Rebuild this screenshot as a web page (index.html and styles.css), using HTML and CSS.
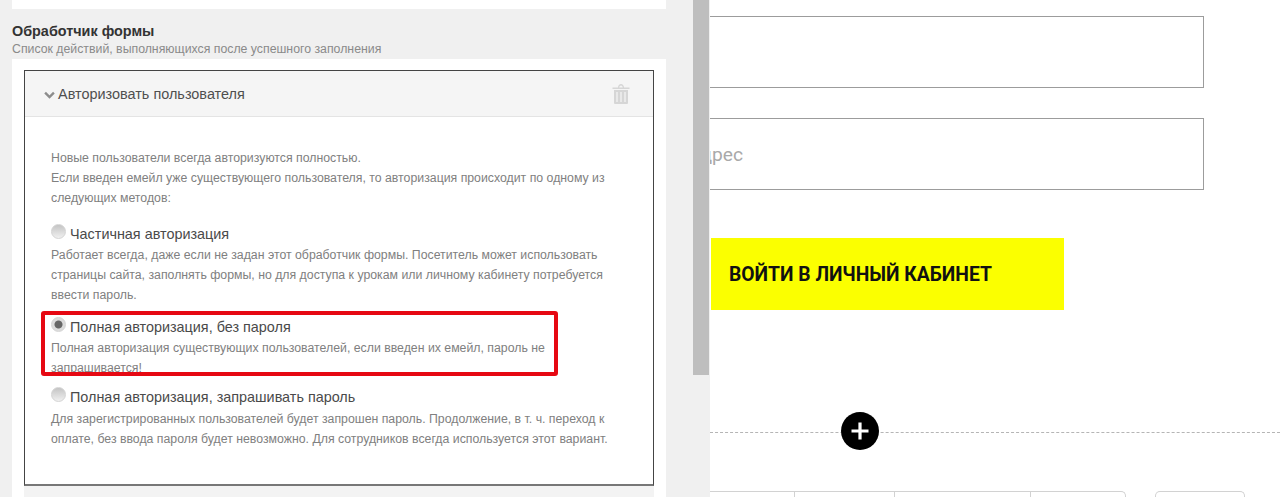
FILE: index.html
```html
<!DOCTYPE html>
<html lang="ru">
<head>
    <meta charset="UTF-8">
    <title>Обработчик формы</title>
    <link rel="stylesheet" href="styles.css">
</head>
<body>
    <div class="sidebar">
        <div class="sidebar-content">
            <div class="top-box"></div>
            <div class="section-head">
                <div class="section-title">Обработчик формы</div>
                <div class="section-sub">Список действий, выполняющихся после успешного заполнения</div>
            </div>
            <div class="section-box">
                <div class="card">
                    <div class="card-head">
                        <svg class="chevron" viewBox="0 0 12 8"><path d="M1.2 1.5 6 6.2l4.800-4.700" fill="none" stroke="#8c8c8c" stroke-width="2.600"/></svg>
                        <span class="card-title">Авторизовать пользователя</span>
                        <svg class="trash" viewBox="0 0 18 21">
                            <path d="M0.500 4.500h17v1.500h-17zM6 4.500c0-4.700 6-4.700 6 0h-1.300c0-2.800-3.400-2.800-3.400 0z" fill="#d6d6d6"/>
                            <path d="M2 7h14v13a1 1 0 0 1-1 1H3a1 1 0 0 1-1-1z" fill="#d6d6d6"/>
                            <path d="M5 9v10M9 9v10M13 9v10" stroke="#f5f5f5" stroke-width="1.200"/>
                        </svg>
                    </div>
                    <div class="card-body">
                        <p class="intro">Новые пользователи всегда авторизуются полностью.<br>Если введен емейл уже существующего пользователя, то авторизация происходит по одному из следующих методов:</p>
                        <div class="option option-first">
                            <label class="option-label"><input type="radio" name="auth">Частичная авторизация</label>
                            <p class="option-text">Работает всегда, даже если не задан этот обработчик формы. Посетитель может использовать страницы сайта, заполнять формы, но для доступа к урокам или личному кабинету потребуется ввести пароль.</p>
                        </div>
                        <div class="option option-second">
                            <div class="highlight"></div>
                            <label class="option-label"><input type="radio" name="auth" checked>Полная авторизация, без пароля</label>
                            <p class="option-text">Полная авторизация существующих пользователей, если введен их емейл, пароль не запрашивается!</p>
                        </div>
                        <div class="option option-third">
                            <label class="option-label"><input type="radio" name="auth">Полная авторизация, запрашивать пароль</label>
                            <p class="option-text">Для зарегистрированных пользователей будет запрошен пароль. Продолжение, в т. ч. переход к оплате, без ввода пароля будет невозможно. Для сотрудников всегда используется этот вариант.</p>
                        </div>
                    </div>
                </div>
                <div class="card-after"></div>
            </div>
        </div>
        <div class="scrollbar"><div class="scroll-thumb"></div></div>
    </div>

    <div class="preview">
        <div class="form">
            <div class="field"></div>
            <div class="field"><span class="placeholder">Адрес</span></div>
            <div class="submit">ВОЙТИ В ЛИЧНЫЙ КАБИНЕТ</div>
        </div>
        <div class="divider">
            <div class="add-btn">
                <svg viewBox="0 0 20 20"><path d="M10 1.500v17M1.500 10h17" stroke="#fff" stroke-width="3.200"/></svg>
            </div>
        </div>
        <div class="tabs-row">
            <div class="tabs">
                <div class="tab tab-a"></div>
                <div class="tab tab-b"></div>
                <div class="tab tab-c"></div>
                <div class="tab tab-d"></div>
            </div>
            <div class="tab-single"></div>
        </div>
    </div>
</body>
</html>
```
FILE: styles.css
```css
* {
    margin: 0;
    padding: 0;
    box-sizing: border-box;
}

body {
    display: flex;
    height: 497px;
    overflow: hidden;
    background: #fff;
    font-family: "Liberation Sans", Arial, sans-serif;
}

/* left settings panel */
.sidebar {
    display: flex;
    flex: 0 0 710px;
    height: 497px;
    overflow: hidden;
    background: #f0f0f0;
}

.sidebar-content {
    flex: 0 0 693px;
    padding: 0 27px 0 12px;
}

.scrollbar {
    flex: 0 0 17px;
}

.scroll-thumb {
    width: 16px;
    height: 375px;
    background: #bebebe;
}

.top-box {
    height: 9px;
    background: #fff;
}

.section-head {
    height: 50px;
    padding-top: 15px;
}

.section-title {
    font-size: 14.400px;
    font-weight: bold;
    line-height: 15px;
    color: #333;
}

.section-sub {
    font-size: 12.300px;
    line-height: 20px;
    color: #8a8a8a;
}

.section-box {
    height: 438px;
    padding: 11px 12px 0;
    background: #fff;
}

.card {
    height: 416px;
    border: 1px solid #444;
    border-bottom: 2px solid #777;
}

.card-after {
    height: 11px;
    background: #f3f3f3;
}

.card-head {
    display: flex;
    align-items: center;
    height: 46px;
    padding: 0 23px 0 19px;
    background: #f5f5f5;
    border-bottom: 1px solid #e4e4e4;
}

.chevron {
    width: 11px;
    height: 8px;
    margin: 3px 3px 0 0;
}

.card-title {
    flex: 1;
    font-size: 14.450px;
    color: #4f4f4f;
}

.trash {
    width: 18px;
    height: 21px;
}

.card-body {
    padding: 31px 24px 0 26px;
    font-size: 12.300px;
    line-height: 20px;
    color: #808080;
}

.option {
    position: relative;
}

.option-first {
    margin-top: 15px;
}

.option-second {
    margin-top: 11px;
}

.option-third {
    margin-top: 8px;
}

.option-third .option-label {
    margin-bottom: 1px;
}

.option-label {
    display: flex;
    align-items: center;
    height: 22px;
    font-size: 14.400px;
    color: #4a4a4a;
}

.option-label input {
    appearance: none;
    width: 15px;
    height: 15px;
    margin: -5px 4px 0 0;
    border: 1px solid #d4d4d4;
    border-radius: 50%;
    background: linear-gradient(#c4c4c4, #f0f0f0);
}

.option-label input:checked {
    background: radial-gradient(circle, #666 0 3.500px, #dcdcdc 4.500px);
}

.option-text {
    font-size: 12.300px;
    line-height: 20px;
}

.highlight {
    position: absolute;
    top: -5px;
    left: -10px;
    width: 517px;
    height: 65px;
    border: 4px solid #e60812;
    border-radius: 3px;
}

/* right page preview */
.preview {
    flex: 1;
    min-width: 0;
    height: 497px;
    overflow: hidden;
}

.form {
    width: 494px;
    padding-top: 16px;
}

.field {
    display: flex;
    align-items: center;
    height: 72px;
    margin-bottom: 30px;
    margin-left: -40px;
    border: 1px solid #9c9c9c;
}

.placeholder {
    margin-left: 17px;
    font-family: Roboto, sans-serif;
    font-size: 19.200px;
    color: #a9a9a9;
}

.submit {
    display: flex;
    align-items: center;
    width: 353px;
    height: 72px;
    margin: 48px 0 0 1px;
    padding-left: 18px;
    background: #fbff00;
    font-family: Roboto, sans-serif;
    font-size: 19.300px;
    font-weight: bold;
    color: #111;
}

.divider {
    position: relative;
    height: 0;
    margin-top: 122px;
    border-top: 1px dashed #b5b5b5;
}

.add-btn {
    position: absolute;
    top: -21px;
    left: 131px;
    display: flex;
    align-items: center;
    justify-content: center;
    width: 38px;
    height: 38px;
    border-radius: 50%;
    background: #000;
}

.add-btn svg {
    width: 20px;
    height: 20px;
}

.tabs-row {
    display: flex;
    gap: 29px;
    margin-top: 58px;
}

.tabs {
    display: flex;
    height: 20px;
    margin-left: -4px;
}

.tab,
.tab-single {
    height: 20px;
    border-top: 1px solid #d2d2d2;
    border-left: 1px solid #d2d2d2;
}

.tab-a {
    width: 88px;
}

.tab-b {
    width: 100px;
}

.tab-c {
    width: 136px;
}

.tab-d {
    width: 96px;
    border-right: 1px solid #d2d2d2;
    border-radius: 0 5px 0 0;
}

.tab-single {
    width: 90px;
    border-right: 1px solid #d2d2d2;
    border-radius: 5px 5px 0 0;
}
```
